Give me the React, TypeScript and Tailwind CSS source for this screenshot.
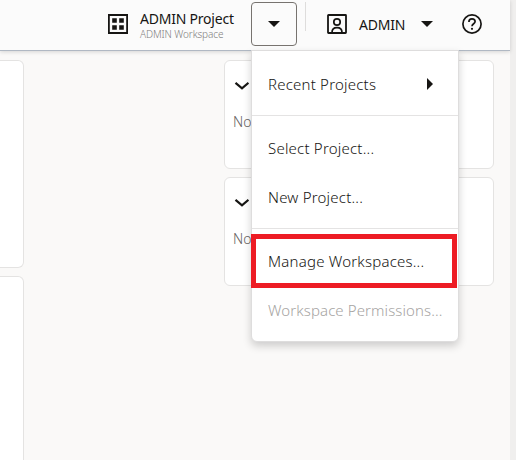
import type { ReactNode } from "react";

function Caret() {
  return (
    <svg width="12" height="6" viewBox="0 0 12 6" className="block shrink-0 fill-[#161513]">
      <path d="M0 0h12L6 6z" />
    </svg>
  );
}

function Panel({ children }: { children: ReactNode }) {
  return (
    <section className="h-[109px] w-[270px] rounded-md border border-[#e4e3e2] bg-white pl-2">
      {children}
    </section>
  );
}

function PanelContent() {
  return (
    <>
      <svg width="16" height="10" viewBox="0 0 16 10" className="mt-5 block fill-none stroke-[#161513] stroke-[2.2]">
        <path d="M2.5 1.8 9 7.3 15.5 1.8" />
      </svg>
      <p className="mt-[21px] text-[14px] font-[350] leading-5 text-[#66625f]">No</p>
    </>
  );
}

function MenuItem({ label, className = "tracking-[0.21px]", children }: { label: string; className?: string; children?: ReactNode }) {
  return (
    <li className={`flex h-[49px] items-center justify-between pb-0.5 pl-4 pr-[25px] text-[15px] font-[350] leading-5 whitespace-nowrap ${className}`}>
      <span>{label}</span>
      {children}
    </li>
  );
}

function Divider() {
  return <li className="mt-1.5 mb-2 h-px bg-[#e4e3e3]" />;
}

export default function App() {
  return (
    <div className="relative flex h-[460px] w-[516px] overflow-hidden bg-[#f0efee] font-['Noto_Sans','Open_Sans',sans-serif] text-[#161513]">
      <div className="flex w-[510px] flex-col bg-[#faf9f8]">
        <header className="z-10 flex h-[51px] shrink-0 border-b border-[#b0b8c3] bg-[#fbfbfb] pl-[108px] shadow-[0_1px_4px_rgba(0,0,0,0.15)]">
          <svg width="20" height="20" viewBox="0 0 20 20" className="mt-3.5 shrink-0">
            <path d="M.9 1h18.2v18H.9z" className="fill-none stroke-[#161513] stroke-[1.8]" />
            <path d="M4.2 4.2h4.6v4.6H4.2zM11.2 4.2h4.6v4.6h-4.6zM4.2 11.2h4.6v4.6H4.2zM11.2 11.2h4.6v4.6h-4.6z" className="fill-[#161513]" />
          </svg>
          <div className="ml-3 mt-[11px] w-[111px] whitespace-nowrap">
            <div className="text-[14px] leading-4 tracking-[-0.22px]">ADMIN Project</div>
            <div className="text-[10px] font-[350] leading-[14px] tracking-[-0.1px] text-[#807d7b]">ADMIN Workspace</div>
          </div>
          <button className="mt-0.5 flex h-11 w-[46px] items-center justify-center rounded border border-[#77736f]">
            <Caret />
          </button>
          <div className="ml-2 mt-0.5 h-[29px] w-px bg-[#dedddc]" />
          <svg width="20" height="20" viewBox="0 0 20 20" className="ml-[21px] mt-3.5 shrink-0 fill-none stroke-[#161513]">
            <rect x="1" y="1" width="18" height="18" rx="0.5" className="stroke-[1.8]" />
            <circle cx="10" cy="8" r="3.2" className="stroke-[1.7]" />
            <path d="M5 18.5c0-3.2 2-4.8 5-4.8s5 1.6 5 4.8" className="stroke-[1.7]" />
          </svg>
          <span className="ml-3 mt-[15px] w-[50px] text-[14px] leading-5 tracking-[-0.2px]">ADMIN</span>
          <div className="ml-[12px] mt-[21px]"><Caret /></div>
          <svg width="20" height="20" viewBox="0 0 20 20" className="ml-[29px] mt-3.5 shrink-0 fill-none stroke-[#161513]">
            <circle cx="10" cy="10" r="9.1" className="stroke-[1.7]" />
            <path d="M6.9 7.9C6.9 6 8.2 4.9 10 4.9s3.1 1.1 3.1 2.7c0 2.2-3.1 2.2-3.1 4.7" className="stroke-[1.7]" />
            <circle cx="10" cy="14.8" r="1.1" className="fill-[#161513] stroke-none" />
          </svg>
        </header>
        <main className="flex justify-between pr-4 pt-[9px]">
          <div className="flex w-6 flex-col gap-2">
            <div className="h-[208px] rounded-r-md border border-l-0 border-[#e4e3e2] bg-white" />
            <div className="h-[208px] rounded-r-md border border-l-0 border-[#e4e3e2] bg-white" />
          </div>
          <div className="flex flex-col gap-2">
            <Panel><PanelContent /></Panel>
            <Panel><PanelContent /></Panel>
          </div>
        </main>
      </div>

      <ul className="absolute left-[251px] top-[50px] z-20 h-[292px] w-[208px] rounded-b-md border border-[#dedddd] bg-white pt-[9px] shadow-[0_4px_8px_rgba(0,0,0,0.18)]">
        <MenuItem label="Recent Projects">
          <svg width="6" height="12" viewBox="0 0 6 12" className="fill-[#161513]"><path d="M0 0v12l6-6z" /></svg>
        </MenuItem>
        <Divider />
        <MenuItem label="Select Project..." />
        <MenuItem label="New Project..." />
        <Divider />
        <MenuItem label="Manage Workspaces..." />
        <MenuItem label="Workspace Permissions..." className="tracking-[0.1px] text-[#a6a4a2]" />
      </ul>
      <div className="absolute left-[251px] top-[234px] z-30 h-[54px] w-[206px] border-5 border-[#ed1c24]" />
    </div>
  );
}
